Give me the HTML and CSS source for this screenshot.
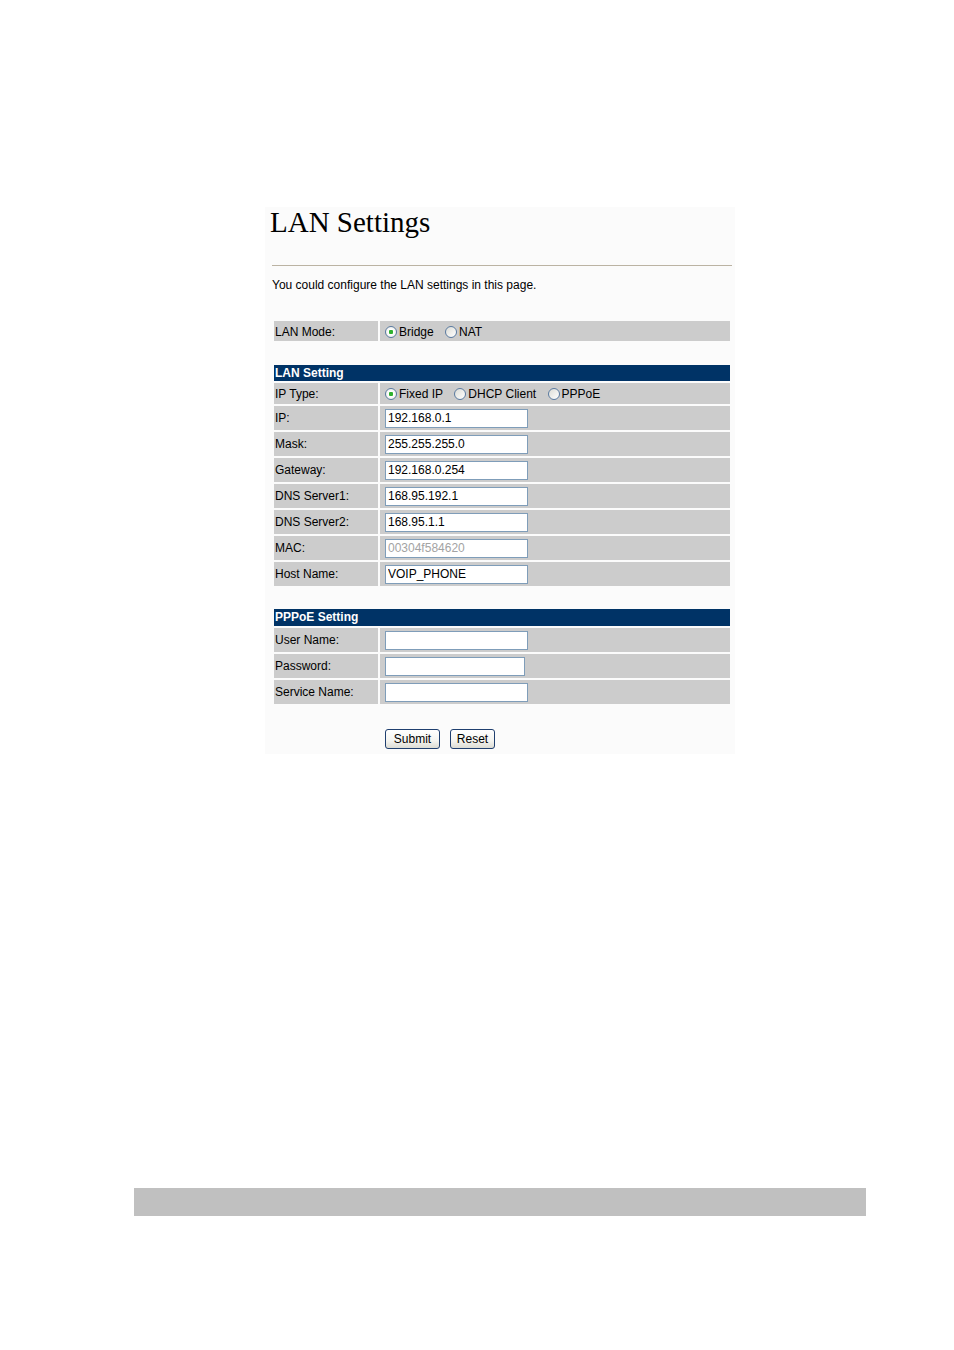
FILE: index.html
```html
<!DOCTYPE html>
<html lang="en">
<head>
    <meta charset="UTF-8">
    <meta name="viewport" content="width=device-width, initial-scale=1.0">
    <title>LAN Settings</title>
    <link rel="stylesheet" href="styles.css">
</head>
<body>

    <div class="panel">
        <h1>LAN Settings</h1>
        <hr class="rule">
        <p class="intro">You could configure the LAN settings in this page.</p>

        <form id="lanForm">
            <table class="settings mode-table">
                <tr class="row-mode">
                    <td class="label">LAN Mode:</td>
                    <td class="value">
                        <label class="opt"><input type="radio" name="lanMode" value="bridge" checked>Bridge</label>
                        <label class="opt"><input type="radio" name="lanMode" value="nat">NAT</label>
                    </td>
                </tr>
            </table>

            <table class="settings lan-table">
                <tr class="head">
                    <td colspan="2">LAN Setting</td>
                </tr>
                <tr class="row-type">
                    <td class="label">IP Type:</td>
                    <td class="value">
                        <label class="opt"><input type="radio" name="ipType" value="fixed" checked>Fixed IP</label>
                        <label class="opt"><input type="radio" name="ipType" value="dhcp">DHCP Client</label>
                        <label class="opt"><input type="radio" name="ipType" value="pppoe">PPPoE</label>
                    </td>
                </tr>
                <tr>
                    <td class="label">IP:</td>
                    <td class="value"><input type="text" class="field" value="192.168.0.1"></td>
                </tr>
                <tr>
                    <td class="label">Mask:</td>
                    <td class="value"><input type="text" class="field" value="255.255.255.0"></td>
                </tr>
                <tr>
                    <td class="label">Gateway:</td>
                    <td class="value"><input type="text" class="field" value="192.168.0.254"></td>
                </tr>
                <tr>
                    <td class="label">DNS Server1:</td>
                    <td class="value"><input type="text" class="field" value="168.95.192.1"></td>
                </tr>
                <tr>
                    <td class="label">DNS Server2:</td>
                    <td class="value"><input type="text" class="field" value="168.95.1.1"></td>
                </tr>
                <tr>
                    <td class="label">MAC:</td>
                    <td class="value"><input type="text" class="field" value="00304f584620" disabled></td>
                </tr>
                <tr>
                    <td class="label">Host Name:</td>
                    <td class="value"><input type="text" class="field" value="VOIP_PHONE"></td>
                </tr>
            </table>

            <table class="settings pppoe-table">
                <tr class="head head-tall">
                    <td colspan="2">PPPoE Setting</td>
                </tr>
                <tr>
                    <td class="label">User Name:</td>
                    <td class="value"><input type="text" class="field"></td>
                </tr>
                <tr>
                    <td class="label">Password:</td>
                    <td class="value"><input type="password" class="field field-short"></td>
                </tr>
                <tr>
                    <td class="label">Service Name:</td>
                    <td class="value"><input type="text" class="field"></td>
                </tr>
            </table>

            <div class="actions">
                <button type="submit" class="btn btn-submit">Submit</button>
                <button type="reset" class="btn btn-reset">Reset</button>
            </div>
        </form>
    </div>

    <div class="page-band"></div>

</body>
</html>
```

FILE: styles.css
```css
body {
    margin: 0;
    background-color: #ffffff;
    font-family: "Liberation Sans", Arial, sans-serif;
    font-size: 12px;
    color: #000000;
}

.panel {
    width: 470px;
    margin: 207px 0 0 265px;
    padding-bottom: 5px;
    background-color: #fbfbfb;
}

h1 {
    margin: 0;
    padding-left: 5px;
    font-family: "Liberation Serif", "Times New Roman", serif;
    font-size: 29px;
    font-weight: normal;
    line-height: 30px;
}

.rule {
    width: 460px;
    margin: 28px 0 0 7px;
    border: none;
    border-top: 1px solid #bbb3a3;
    height: 0;
}

.intro {
    margin: 12px 0 0 7px;
    line-height: 14px;
}

form {
    margin: 0;
}

.settings {
    width: 460px;
    margin-left: 7px;
    border-collapse: separate;
    border-spacing: 2px;
}

.mode-table {
    margin-top: 27px;
}

.lan-table {
    margin-top: 20px;
}

.pppoe-table {
    margin-top: 19px;
}

.settings td {
    padding: 0;
    height: 24px;
    background-color: #cccccc;
    vertical-align: middle;
    white-space: nowrap;
}

.settings td.label {
    width: 103px;
    padding-left: 1px;
}

.settings td.value {
    padding-left: 5px;
}

.row-mode td {
    height: 18px;
    padding-top: 2px;
}

.row-type td {
    height: 20px;
    padding-top: 1px;
}

.head td {
    height: 16px;
    padding-left: 1px;
    background-color: #003366;
    color: #ffffff;
    font-weight: bold;
    line-height: 16px;
}

    .head-tall td {
        height: 17px;
        line-height: 17px;
    }

.opt {
    display: inline-flex;
    align-items: center;
    vertical-align: middle;
    margin-right: 8px;
}

.opt input[type="radio"] {
    appearance: none;
    -webkit-appearance: none;
    width: 12px;
    height: 12px;
    margin: 0 2px 0 0;
    border: 1px solid #5a7aa0;
    border-radius: 50%;
    background: linear-gradient(135deg, #dcdcd6, #ffffff);
    box-sizing: border-box;
}

    .opt input[type="radio"]:checked {
        background: radial-gradient(circle, #2fb12f 0, #2fb12f 2px, #ffffff 2.5px, #e6e6e0 100%);
    }

.field {
    width: 143px;
    height: 19px;
    box-sizing: border-box;
    margin: 0;
    padding: 0 2px;
    border: 1px solid #7f9db9;
    background-color: #ffffff;
    font-family: "Liberation Sans", Arial, sans-serif;
    font-size: 12px;
    color: #000000;
    vertical-align: middle;
}

    .field:disabled {
        color: #a3a3a3;
        background-color: #ffffff;
    }

.field-short {
    width: 140px;
}

.actions {
    display: flex;
    gap: 10px;
    margin: 23px 0 0 120px;
}

.btn {
    height: 20px;
    padding: 0;
    border: 1px solid #1f3f6f;
    border-radius: 3px;
    background: linear-gradient(#ffffff, #f4f4f0 60%, #dcdcd4);
    font-family: "Liberation Sans", Arial, sans-serif;
    font-size: 12px;
    color: #000000;
    cursor: pointer;
}

.btn-submit {
    width: 55px;
}

.btn-reset {
    width: 45px;
}

.page-band {
    width: 732px;
    height: 28px;
    margin: 434px 0 0 134px;
    background-color: #c0c0c0;
}
```
